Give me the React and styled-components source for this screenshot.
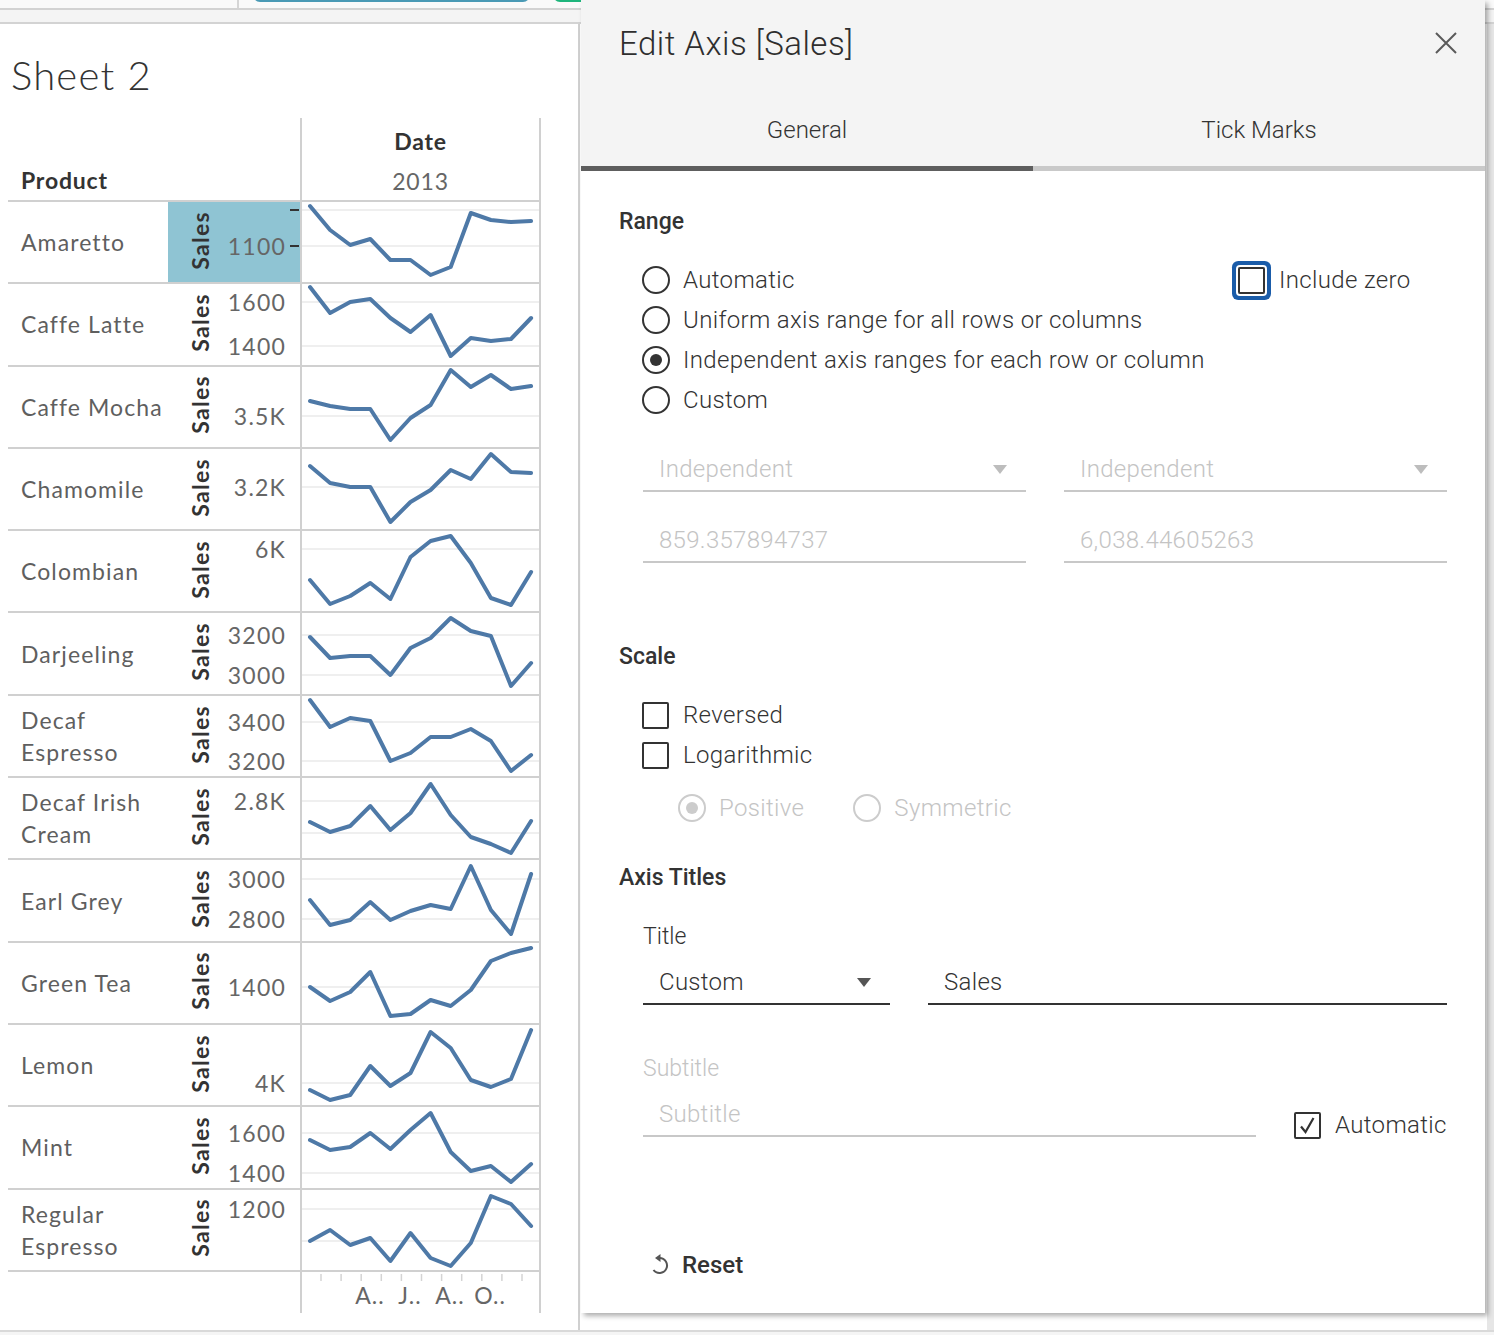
import React from "react";
import styled, { createGlobalStyle } from "styled-components";

// Tableau-like worksheet with the "Edit Axis" dialog open on top of it.

const GlobalStyle = createGlobalStyle`
  html, body {
    margin: 0;
    padding: 0;
    background: #ffffff;
  }
  body {
    width: 1494px;
    height: 1335px;
    overflow: hidden;
    font-family: Roboto, "Liberation Sans", sans-serif;
  }
`;

const STEP = 20.1;
const X0 = 8;

const rows = [
  { name: ["Amaretto"], selected: true, ticks: [{ y: 8, label: "" }, { y: 44, label: "1100" }], pts: [4, 28, 43, 37, 58, 58, 73, 65, 11, 18, 20, 19] },
  { name: ["Caffe Latte"], ticks: [{ y: 18, label: "1600" }, { y: 62, label: "1400" }], pts: [3, 29, 18, 15, 34, 48, 31, 72, 54, 57, 55, 34] },
  { name: ["Caffe Mocha"], ticks: [{ y: 49, label: "3.5K" }], pts: [34, 39, 42, 42, 73, 51, 38, 3, 20, 8, 22, 19] },
  { name: ["Chamomile"], ticks: [{ y: 38, label: "3.2K" }], pts: [17, 34, 38, 38, 73, 53, 41, 21, 30, 5, 23, 24] },
  { name: ["Colombian"], ticks: [{ y: 18, label: "6K" }], pts: [49, 73, 65, 52, 68, 26, 10, 5, 32, 67, 74, 41] },
  { name: ["Darjeeling"], ticks: [{ y: 22, label: "3200" }, { y: 62, label: "3000" }], pts: [24, 45, 43, 43, 62, 35, 25, 5, 18, 23, 73, 50] },
  { name: ["Decaf", "Espresso"], ticks: [{ y: 26, label: "3400" }, { y: 65, label: "3200" }], pts: [4, 31, 22, 25, 65, 57, 41, 41, 33, 45, 75, 59] },
  { name: ["Decaf Irish", "Cream"], ticks: [{ y: 23, label: "2.8K" }, { y: 55, label: "" }], pts: [44, 54, 48, 28, 52, 35, 6, 37, 59, 66, 75, 43] },
  { name: ["Earl Grey"], ticks: [{ y: 19, label: "3000" }, { y: 59, label: "2800" }], pts: [40, 65, 60, 42, 60, 51, 45, 49, 6, 50, 74, 14] },
  { name: ["Green Tea"], ticks: [{ y: 44, label: "1400" }], pts: [44, 58, 49, 29, 73, 71, 57, 63, 47, 18, 10, 5] },
  { name: ["Lemon"], ticks: [{ y: 58, label: "4K" }], pts: [65, 75, 70, 41, 61, 48, 7, 23, 55, 62, 54, 5] },
  { name: ["Mint"], ticks: [{ y: 26, label: "1600" }, { y: 66, label: "1400" }], pts: [33, 43, 40, 26, 42, 23, 6, 45, 64, 59, 75, 57] },
  { name: ["Regular", "Espresso"], ticks: [{ y: 19, label: "1200" }, { y: 51, label: "" }], pts: [51, 40, 55, 48, 71, 43, 68, 76, 53, 6, 14, 36] },
];

const monthLabels = [
  { x: 68, text: "A.." },
  { x: 108, text: "J.." },
  { x: 148, text: "A.." },
  { x: 188, text: "O.." },
];

/* ---------- page chrome ---------- */

const Page = styled.div`
  position: relative;
  width: 1494px;
  height: 1335px;
  background: #f5f5f5;
`;

const TopStrip = styled.div`
  display: flex;
  height: 8px;
  padding-left: 237px;
  background: #fafafa;
  border-bottom: 2px solid #d3d3d3;
  overflow: hidden;
`;

const StripDivider = styled.div`
  width: 2px;
  background: #d6d6d6;
`;

const Pill = styled.div`
  width: ${(p) => p.$w}px;
  height: 14px;
  margin-top: -12px;
  margin-left: ${(p) => p.$ml}px;
  border-radius: 7px;
  background: ${(p) => p.$color};
`;

const SubStrip = styled.div`
  height: 12px;
  background: #f4f4f4;
  border-bottom: 2px solid #d3d3d3;
`;

const Workspace = styled.div`
  display: flex;
  height: 1306px;
  background: #ffffff;
  border-bottom: 2px solid #d9d9d9;
`;

const WorkspaceFill = styled.div`
  flex: 1;
`;

const ScrollTrack = styled.div`
  width: 7px;
  background: #e6e6e6;
`;

/* ---------- worksheet ---------- */

const SheetPane = styled.div`
  width: 578px;
  border-right: 2px solid #d0d0d0;
  font-family: Lato, "Open Sans", sans-serif;
`;

const SheetTitle = styled.div`
  margin: 27px 0 19px 11px;
  font-size: 40px;
  line-height: 48px;
  font-weight: 300;
  letter-spacing: 1.2px;
  color: #333333;
`;

const Table = styled.div`
  margin-left: 8px;
  width: 533px;
`;

const HeaderRow = styled.div`
  display: flex;
  height: 84px;
  box-sizing: border-box;
  border-bottom: 2px solid #d0d0d0;
`;

const ProductHead = styled.div`
  width: 292px;
  box-sizing: border-box;
  display: flex;
  align-items: flex-end;
  padding: 0 0 5px 13px;
  font-size: 23px;
  line-height: 30px;
  font-weight: 700;
  letter-spacing: 0.8px;
  color: #333333;
`;

const DateHead = styled.div`
  width: 241px;
  box-sizing: border-box;
  border-left: 2px solid #d0d0d0;
  border-right: 2px solid #d0d0d0;
  display: flex;
  flex-direction: column;
  align-items: center;
  padding-top: 8px;
`;

const HeadText = styled.div`
  font-size: 23px;
  line-height: 30px;
  letter-spacing: 0.8px;
  font-weight: ${(p) => (p.$bold ? 700 : 400)};
  color: ${(p) => (p.$bold ? "#333333" : "#666666")};
  margin-top: ${(p) => p.$mt || 0}px;
`;

const Row = styled.div`
  display: flex;
  height: 82.3px;
  box-sizing: border-box;
  border-bottom: 2px solid #d0d0d0;
`;

const LabelCell = styled.div`
  width: 160px;
  box-sizing: border-box;
  padding-left: 13px;
  display: flex;
  align-items: center;
  font-size: 23px;
  line-height: 32px;
  letter-spacing: 1.1px;
  color: #5f5f5f;
`;

const AxisCell = styled.div`
  position: relative;
  width: 132px;
  display: flex;
  align-items: center;
  background: ${(p) => (p.$selected ? "#8fc4d3" : "transparent")};
`;

const SalesTitle = styled.div`
  margin-left: 20px;
  margin-bottom: 4px;
  writing-mode: vertical-rl;
  transform: rotate(180deg);
  font-size: 23px;
  line-height: 24px;
  font-weight: 700;
  letter-spacing: 1.3px;
  color: #333333;
`;

const TickLabel = styled.span`
  position: absolute;
  right: 14px;
  transform: translateY(-50%);
  font-size: 23px;
  line-height: 26px;
  letter-spacing: 1.2px;
  color: #666666;
`;

const TickMark = styled.span`
  position: absolute;
  right: 1px;
  width: 9px;
  height: 2px;
  margin-top: -1px;
  background: #333333;
`;

const ChartCell = styled.div`
  width: 241px;
  box-sizing: border-box;
  border-left: 2px solid #d0d0d0;
  border-right: 2px solid #d0d0d0;
`;

const AxisRow = styled.div`
  display: flex;
  height: 41px;
  padding-left: 292px;
`;

const AxisChart = styled.div`
  position: relative;
  width: 241px;
  box-sizing: border-box;
  border-left: 2px solid #d0d0d0;
  border-right: 2px solid #d0d0d0;
`;

const MonthLabel = styled.span`
  position: absolute;
  top: 10px;
  transform: translateX(-50%);
  font-size: 23px;
  line-height: 26px;
  letter-spacing: 1px;
  color: #666666;
`;

const Sparkline = ({ pts, ticks }) => (
  <svg width="237" height="80" viewBox="0 0 237 80" style={{ display: "block" }}>
    {ticks.map((t, i) => (
      <line key={i} x1="0" x2="237" y1={t.y} y2={t.y} stroke="#efefef" strokeWidth="2" />
    ))}
    <polyline
      points={pts.map((y, i) => `${X0 + i * STEP},${y}`).join(" ")}
      fill="none"
      stroke="#4e79a7"
      strokeWidth="4"
      strokeLinejoin="round"
      strokeLinecap="round"
    />
  </svg>
);

const Worksheet = () => (
  <SheetPane>
    <SheetTitle>Sheet 2</SheetTitle>
    <Table>
      <HeaderRow>
        <ProductHead>Product</ProductHead>
        <DateHead>
          <HeadText $bold>Date</HeadText>
          <HeadText $mt={10}>2013</HeadText>
        </DateHead>
      </HeaderRow>
      {rows.map((r) => (
        <Row key={r.name.join(" ")}>
          <LabelCell>
            <div>
              {r.name.map((n, i) => (
                <div key={i}>{n}</div>
              ))}
            </div>
          </LabelCell>
          <AxisCell $selected={r.selected}>
            <SalesTitle>Sales</SalesTitle>
            {r.ticks.map((t, i) =>
              t.label ? (
                <TickLabel key={i} style={{ top: t.y }}>
                  {t.label}
                </TickLabel>
              ) : null
            )}
            {r.selected && r.ticks.map((t, i) => <TickMark key={"m" + i} style={{ top: t.y }} />)}
          </AxisCell>
          <ChartCell>
            <Sparkline pts={r.pts} ticks={r.ticks} />
          </ChartCell>
        </Row>
      ))}
      <AxisRow>
        <AxisChart>
          <svg width="237" height="12" style={{ display: "block" }}>
            {Array.from({ length: 11 }).map((_, i) => (
              <line key={i} x1={19 + i * STEP} x2={19 + i * STEP} y1="2" y2="9" stroke="#d4d4d4" strokeWidth="1.5" />
            ))}
          </svg>
          {monthLabels.map((m, i) => (
            <MonthLabel key={i} style={{ left: m.x }}>
              {m.text}
            </MonthLabel>
          ))}
        </AxisChart>
      </AxisRow>
    </Table>
  </SheetPane>
);

/* ---------- dialog ---------- */

const Dialog = styled.div`
  position: absolute;
  left: 581px;
  top: 0;
  width: 904px;
  height: 1313px;
  display: flex;
  flex-direction: column;
  background: #ffffff;
  box-shadow: 3px 3px 5px rgba(0, 0, 0, 0.32);
  color: #333333;
`;

const DialogHeader = styled.div`
  background: #f4f4f4;
`;

const TitleRow = styled.div`
  display: flex;
  align-items: center;
  justify-content: space-between;
  height: 86px;
  padding: 0 28px 0 38px;
`;

const DialogTitle = styled.div`
  font-size: 33px;
  font-weight: 300;
  letter-spacing: 0.5px;
  color: #2e2e2e;
`;

const CloseButton = styled.button`
  width: 22px;
  height: 22px;
  padding: 0;
  border: none;
  background: transparent;
  cursor: pointer;
`;

const TabBar = styled.div`
  display: flex;
`;

const Tab = styled.div`
  flex: 1;
  height: 85px;
  padding-top: 8px;
  box-sizing: border-box;
  display: flex;
  align-items: center;
  justify-content: center;
  border-bottom: 5px solid ${(p) => (p.$active ? "#5e5e5e" : "#c9c9c9")};
  font-size: 24px;
  font-weight: 300;
  color: #333333;
`;

const Body = styled.div`
  display: flex;
  flex-direction: column;
  padding: 0 38px;
`;

const SectionTitle = styled.div`
  margin-top: ${(p) => p.$mt}px;
  font-size: 23px;
  line-height: 30px;
  font-weight: 500;
  color: #333333;
`;

const RangeGrid = styled.div`
  display: grid;
  grid-template-columns: 590px 1fr;
  margin-top: 23px;
  padding-left: 23px;
`;

const OptionList = styled.div`
  display: flex;
  flex-direction: ${(p) => (p.$row ? "row" : "column")};
  gap: ${(p) => (p.$row ? "49px" : "0")};
  margin-top: ${(p) => p.$mt || 0}px;
  padding-left: ${(p) => p.$pl || 0}px;
`;

const Option = styled.div`
  display: flex;
  align-items: center;
  gap: 13px;
  height: 40px;
  margin-top: ${(p) => p.$mt || 0}px;
  font-size: 24px;
  font-weight: 300;
  letter-spacing: 0.35px;
  white-space: nowrap;
  color: ${(p) => (p.$disabled ? "#c4c4c4" : "#333333")};
`;

const RadioCircle = styled.span`
  position: relative;
  width: 28px;
  height: 28px;
  box-sizing: border-box;
  border-radius: 50%;
  border: 2px solid ${(p) => (p.$disabled ? "#cccccc" : "#333333")};
  flex-shrink: 0;

  &::after {
    content: "";
    display: ${(p) => (p.$checked ? "block" : "none")};
    position: absolute;
    left: 6px;
    top: 6px;
    width: 12px;
    height: 12px;
    border-radius: 50%;
    background: ${(p) => (p.$disabled ? "#cccccc" : "#333333")};
  }
`;

const CheckBox = styled.span`
  display: flex;
  align-items: center;
  justify-content: center;
  width: 27px;
  height: 27px;
  box-sizing: border-box;
  border: 2px solid #333333;
  border-radius: 2px;
  flex-shrink: 0;
  margin-right: 1px;
  box-shadow: ${(p) => (p.$focused ? "0 0 0 2px #ffffff, 0 0 0 6px #1a5ca9" : "none")};
  margin-left: ${(p) => (p.$focused ? "6px" : "0")};
`;

const FieldGrid = styled.div`
  display: grid;
  grid-template-columns: ${(p) => p.$cols};
  column-gap: 38px;
  row-gap: 27px;
  margin-top: ${(p) => p.$mt}px;
  padding-left: 24px;
`;

const Field = styled.div`
  display: flex;
  align-items: center;
  justify-content: space-between;
  width: ${(p) => (p.$w ? `${p.$w}px` : "auto")};
  height: 44px;
  box-sizing: border-box;
  padding: 0 12px 0 16px;
  border-bottom: 2px solid ${(p) => (p.$dark ? "#333333" : "#c8c8c8")};
  font-size: 24px;
  font-weight: 300;
  letter-spacing: 0.3px;
  color: ${(p) => (p.$dark ? "#333333" : "#c4c4c4")};
`;

const Caret = styled.span`
  width: 0;
  height: 0;
  margin-right: 7px;
  border-left: 7px solid transparent;
  border-right: 7px solid transparent;
  border-top: 9px solid ${(p) => (p.$dark ? "#555555" : "#bdbdbd")};
`;

const FieldLabel = styled.div`
  margin-top: ${(p) => p.$mt}px;
  padding-left: 24px;
  font-size: 23px;
  line-height: 30px;
  font-weight: 300;
  color: ${(p) => (p.$disabled ? "#c4c4c4" : "#333333")};
`;

const SubtitleRow = styled.div`
  display: flex;
  align-items: flex-start;
  gap: 38px;
  margin-top: 9px;
  padding-left: 24px;
`;

const ResetButton = styled.button`
  display: flex;
  align-items: center;
  gap: 12px;
  height: 40px;
  margin-top: 100px;
  margin-left: 32px;
  padding: 0;
  border: none;
  background: transparent;
  font-family: inherit;
  font-size: 24px;
  font-weight: 500;
  color: #333333;
  cursor: pointer;
`;

const Radio = ({ label, checked, disabled }) => (
  <Option $disabled={disabled}>
    <RadioCircle $checked={checked} $disabled={disabled} />
    {label}
  </Option>
);

const Check = ({ label, checked, focused, mt }) => (
  <Option $mt={mt}>
    <CheckBox $focused={focused}>
      {checked && (
        <svg width="19" height="19" viewBox="0 0 19 19">
          <path d="M3 10.5 L7.5 16 L15.5 2" fill="none" stroke="#333" strokeWidth="2.2" />
        </svg>
      )}
    </CheckBox>
    {label}
  </Option>
);

const EditAxisDialog = () => (
  <Dialog>
    <DialogHeader>
      <TitleRow>
        <DialogTitle>Edit Axis [Sales]</DialogTitle>
        <CloseButton aria-label="Close">
          <svg width="22" height="22" viewBox="0 0 22 22">
            <path d="M1 1 L21 21 M21 1 L1 21" stroke="#5a5a5a" strokeWidth="2" />
          </svg>
        </CloseButton>
      </TitleRow>
      <TabBar>
        <Tab $active>General</Tab>
        <Tab>Tick Marks</Tab>
      </TabBar>
    </DialogHeader>

    <Body>
      <SectionTitle $mt={36}>Range</SectionTitle>
      <RangeGrid>
        <OptionList>
          <Radio label="Automatic" />
          <Radio label="Uniform axis range for all rows or columns" />
          <Radio label="Independent axis ranges for each row or column" checked />
          <Radio label="Custom" />
        </OptionList>
        <div>
          <Check label="Include zero" focused />
        </div>
      </RangeGrid>

      <FieldGrid $cols="383px 383px" $mt={28}>
        <Field>
          Independent
          <Caret />
        </Field>
        <Field>
          Independent
          <Caret />
        </Field>
        <Field>859.357894737</Field>
        <Field>6,038.44605263</Field>
      </FieldGrid>

      <SectionTitle $mt={79}>Scale</SectionTitle>
      <OptionList $mt={23} $pl={23}>
        <Check label="Reversed" />
        <Check label="Logarithmic" />
      </OptionList>
      <OptionList $row $mt={13} $pl={59}>
        <Radio label="Positive" checked disabled />
        <Radio label="Symmetric" disabled />
      </OptionList>

      <SectionTitle $mt={35}>Axis Titles</SectionTitle>
      <FieldLabel $mt={29}>Title</FieldLabel>
      <FieldGrid $cols="247px 519px" $mt={9}>
        <Field $dark>
          Custom
          <Caret $dark />
        </Field>
        <Field $dark>Sales</Field>
      </FieldGrid>

      <FieldLabel $mt={49} $disabled>
        Subtitle
      </FieldLabel>
      <SubtitleRow>
        <Field $w={613}>Subtitle</Field>
        <Check label="Automatic" checked mt={12} />
      </SubtitleRow>

      <ResetButton>
        <svg width="19" height="24" viewBox="0 0 19 24">
          <path d="M8.5 5 A7.5 7.5 0 1 1 2.5 17" fill="none" stroke="#555" strokeWidth="2" />
          <path d="M4 5 L9.5 1 L9.5 9 Z" fill="#555" />
        </svg>
        Reset
      </ResetButton>
    </Body>
  </Dialog>
);

export default function App() {
  return (
    <>
      <GlobalStyle />
      <Page>
        <TopStrip>
          <StripDivider />
          <Pill $w={277} $ml={14} $color="#4a9ab5" />
          <Pill $w={60} $ml={23} $color="#1fb57c" />
        </TopStrip>
        <SubStrip />
        <Workspace>
          <Worksheet />
          <WorkspaceFill />
          <ScrollTrack />
        </Workspace>
        <EditAxisDialog />
      </Page>
    </>
  );
}
